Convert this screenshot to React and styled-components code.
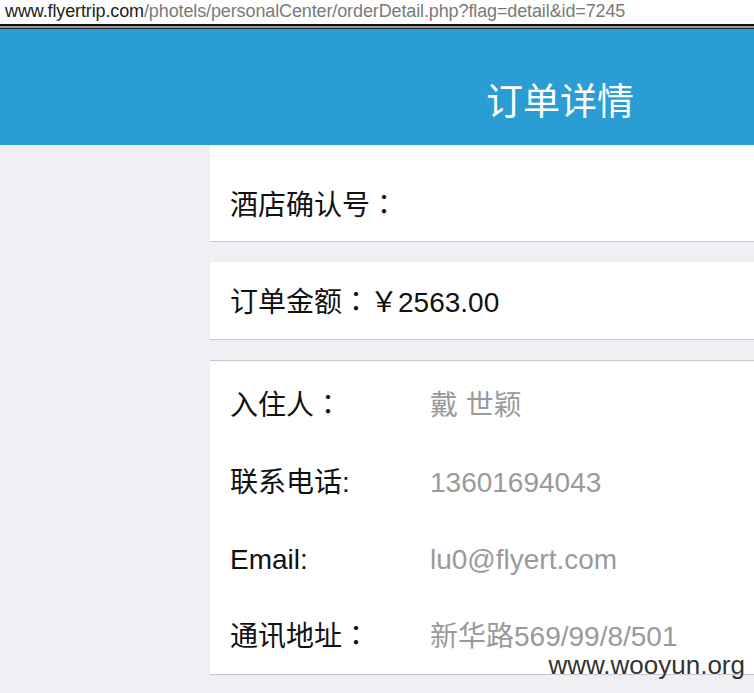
import React from "react";
import styled, { createGlobalStyle } from "styled-components";

const Global = createGlobalStyle`
  html, body { margin: 0; padding: 0; background: #efeff4; overflow: hidden; }
  body { font-family: "Liberation Sans", "Noto Sans CJK SC", sans-serif; }
`;

const Screen = styled.div`
  position: relative;
  width: 754px;
  height: 693px;
  overflow: hidden;
  background: #efeff4;
  display: flex;
  flex-direction: column;
`;

const AddressBar = styled.div`
  height: 24px;
  background: #fff;
  padding-left: 5px;
  font-size: 18px;
  line-height: 22px;
  white-space: nowrap;
  color: #7a7a7a;
  letter-spacing: -0.12px;
  border-bottom: 2px solid #111;
`;

const Host = styled.span`
  color: #222;
`;

const Rule = styled.div`
  height: 2px;
  background: #9a9a9a;
  border-bottom: 1px solid #222;
`;

const Header = styled.header`
  height: 116px;
  background: #2b9dd5;
  display: grid;
  grid-template-columns: 210px 700px;
`;

const Title = styled.h1`
  grid-column: 2;
  margin: 0;
  padding-top: 52px;
  text-align: center;
  color: #fff;
  font-weight: normal;
  font-size: 37px;
  line-height: 44px;
  white-space: nowrap;
`;

const Body = styled.div`
  flex: 1;
  display: grid;
  grid-template-columns: 210px 700px;
  align-content: start;
`;

const Content = styled.main`
  grid-column: 2;
  display: flex;
  flex-direction: column;
  gap: 20px;
`;

const Card = styled.section`
  box-sizing: border-box;
  height: ${(p) => p.$h}px;
  background: #fff;
  border-bottom: 1px solid #c8c7cc;
  border-top: ${(p) => (p.$top ? "1px solid #c8c7cc" : "none")};
  padding: ${(p) => p.$pad || "0"};
  padding-left: 20px;
  font-size: 28px;
  line-height: 40px;
  color: #111;
  white-space: nowrap;
  overflow: hidden;
`;

const Row = styled.div`
  display: grid;
  grid-template-columns: 200px 1fr;
  align-items: center;
  height: 77px;
  line-height: 40px;
`;

const Label = styled.span`
  color: #111;
  font-size: 28px;
`;

const Value = styled.span`
  color: #9a9a9a;
  font-size: 28px;
`;

const Colon = styled.span`
  font-family: "Noto Sans CJK TC", "Noto Sans CJK SC", sans-serif;
  line-height: 1;
`;

const Watermark = styled.div`
  position: absolute;
  right: 9px;
  bottom: 13px;
  font-size: 26px;
  line-height: 30px;
  color: #333;
  text-shadow: 0 0 2px #fff;
`;

const rows = [
  [<>入住人<Colon>：</Colon></>, "戴 世颖", "a"],
  ["联系电话:", "13601694043", "b"],
  ["Email:", "lu0@flyert.com", "c"],
  [<>通讯地址<Colon>：</Colon></>, "新华路569/99/8/501", "d"],
];

export default function App() {
  return (
    <Screen>
      <Global />
      <AddressBar>
        <Host>www.flyertrip.com</Host>/photels/personalCenter/orderDetail.php?flag=detail&amp;id=7245
      </AddressBar>
      <Rule />
      <Header>
        <Title>订单详情</Title>
      </Header>
      <Body>
        <Content>
          <Card $h={97} $pad="41px 0 0">酒店确认号<Colon>：</Colon></Card>
          <Card $h={78} $pad="21px 0 0">订单金额<Colon>：</Colon>￥2563.00</Card>
          <Card $h={315} $top $pad="6px 0 0">
            {rows.map(([l, v, k]) => (
              <Row key={k}>
                <Label>{l}</Label>
                <Value>{v}</Value>
              </Row>
            ))}
          </Card>
        </Content>
      </Body>
      <Watermark>www.wooyun.org</Watermark>
    </Screen>
  );
}
